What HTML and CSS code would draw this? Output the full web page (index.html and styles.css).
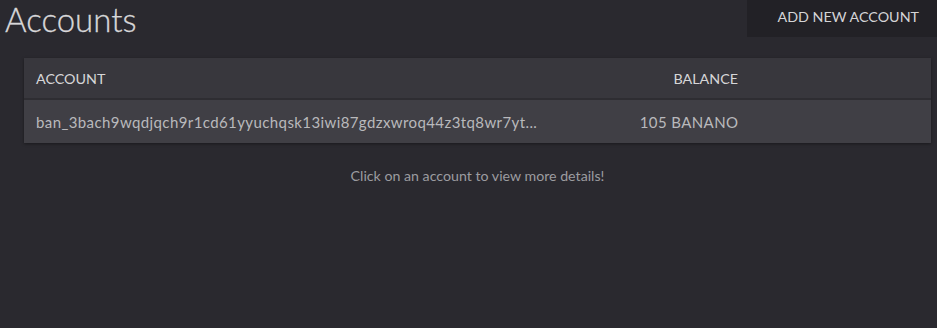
FILE: index.html
```html
<!DOCTYPE html>
<html>
<head>
<meta charset="utf-8">
<link rel="stylesheet" href="styles.css">
</head>
<body>
<div class="page">
  <div class="topbar">
    <h1 class="title">Accounts</h1>
    <button class="add-btn">ADD NEW ACCOUNT</button>
  </div>
  <div class="content">
    <table class="accounts">
      <thead>
        <tr>
          <th class="col-acc">ACCOUNT</th>
          <th class="col-bal">BALANCE</th>
          <th class="col-rest"></th>
        </tr>
      </thead>
      <tbody>
        <tr>
          <td class="col-acc">ban_3bach9wqdjqch9r1cd61yyuchqsk13iwi87gdzxwroq44z3tq8wr7yt...</td>
          <td class="col-bal">105 BANANO</td>
          <td class="col-rest"></td>
        </tr>
      </tbody>
    </table>
    <p class="hint">Click on an account to view more details!</p>
  </div>
</div>
</body>
</html>
```
FILE: styles.css
```css
html, body {
  margin: 0;
  padding: 0;
  background: #2a292f;
  font-family: Lato, "Open Sans", sans-serif;
  color: #d4d4d6;
}
.page {
  width: 937px;
  height: 328px;
}
.topbar {
  display: flex;
  justify-content: space-between;
  align-items: flex-start;
}
.title {
  margin: 0;
  padding: 0 0 0 5px;
  font-size: 33px;
  font-weight: 300;
  line-height: 38px;
  color: #d7d7d9;
  -webkit-text-stroke: 0.3px #d7d7d9;
}
.add-btn {
  width: 190px;
  height: 37px;
  background: #222126;
  border: none;
  color: #d4d4d6;
  font-family: Lato, sans-serif;
  font-size: 14.3px;
  text-align: right;
  padding: 0 18px 4px 0;
}
.content {
  padding: 20px 6px 0 24px;
}
.accounts {
  width: 907px;
  table-layout: fixed;
  border-collapse: collapse;
  box-shadow: 0 1px 3px rgba(0,0,0,0.4);
}
.accounts th, .accounts td {
  box-sizing: border-box;
  padding: 0 12px;
  white-space: nowrap;
}
.accounts th {
  background: #38373d;
  height: 41px;
  font-size: 14.3px;
  font-weight: 400;
  color: #d6d6d8;
  border-bottom: 2px solid #2e2d32;
  text-align: left;
}
.accounts td {
  background: #403f45;
  height: 44px;
  font-size: 15px;
  letter-spacing: 0.4px;
  color: #b9b9bc;
}
.accounts .col-acc { text-align: left; width: 600px; }
.accounts .col-bal { text-align: right; width: 126px; }
.accounts .col-rest { width: 181px; }
.accounts td.col-bal { padding-right: 11.6px; }
.hint {
  margin: 24px 0 0 0;
  text-align: center;
  font-size: 14.2px;
  color: #9c9ca0;
}
```
